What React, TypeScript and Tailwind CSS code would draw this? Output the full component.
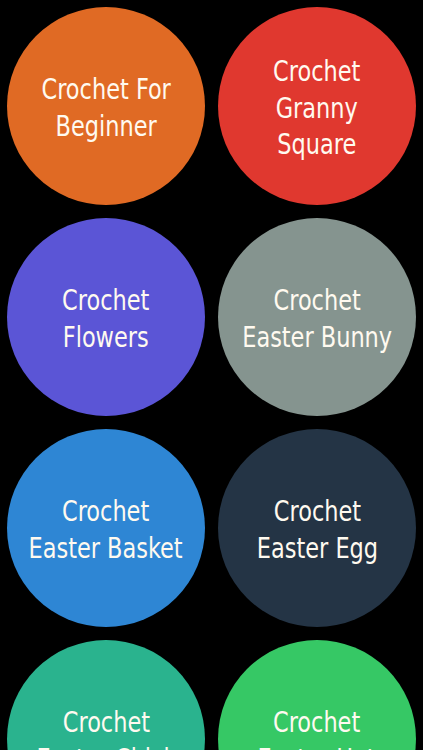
import React from "react";

const items: { lines: string[]; bg: string }[] = [
  { lines: ["Crochet For", "Beginner"], bg: "bg-[#e06a24]" },
  { lines: ["Crochet", "Granny", "Square"], bg: "bg-[#e0382f]" },
  { lines: ["Crochet", "Flowers"], bg: "bg-[#5b55d6]" },
  { lines: ["Crochet", "Easter Bunny"], bg: "bg-[#85948f]" },
  { lines: ["Crochet", "Easter Basket"], bg: "bg-[#2e86d4]" },
  { lines: ["Crochet", "Easter Egg"], bg: "bg-[#243445]" },
  { lines: ["Crochet", "Easter Chick"], bg: "bg-[#2ab38e]" },
  { lines: ["Crochet", "Easter Hat"], bg: "bg-[#36c865]" },
];

export default function App() {
  return (
    <div className="min-h-screen bg-black">
      <div className="grid grid-cols-[198px_198px] gap-[13px] p-[7px]">
        {items.map((it, i) => (
          <div
            key={i}
            className={`flex h-[198px] w-[198px] items-center justify-center rounded-full pt-[4px] ${it.bg}`}
          >
            <div className="scale-x-[0.86] whitespace-nowrap text-center text-[29px] leading-[36.8px] text-[#fffaf0] [font-family:'DejaVu_Sans_Condensed','DejaVu_Sans',sans-serif]">
              {it.lines.map((l, j) => (
                <div key={j}>{l}</div>
              ))}
            </div>
          </div>
        ))}
      </div>
    </div>
  );
}
